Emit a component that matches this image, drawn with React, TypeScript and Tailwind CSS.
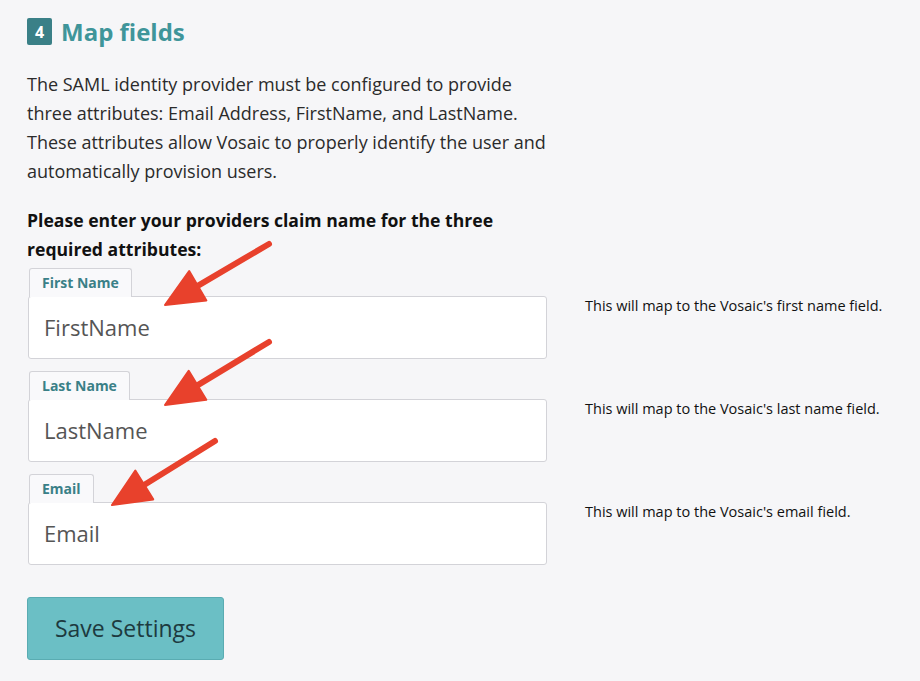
import React from "react";

const fields = [
  { label: "First Name", value: "FirstName", help: "This will map to the Vosaic's first name field." },
  { label: "Last Name", value: "LastName", help: "This will map to the Vosaic's last name field." },
  { label: "Email", value: "Email", help: "This will map to the Vosaic's email field." },
];

function Arrow({ x1, y1, x2, y2 }: { x1: number; y1: number; x2: number; y2: number }) {
  const dx = x2 - x1;
  const dy = y2 - y1;
  const len = Math.sqrt(dx * dx + dy * dy);
  const ux = dx / len;
  const uy = dy / len;
  const hl = 38;
  const hw = 17;
  const bx = x2 - ux * hl;
  const by = y2 - uy * hl;
  const px = -uy;
  const py = ux;
  const pts = `${x2},${y2} ${bx + px * hw},${by + py * hw} ${bx - px * hw},${by - py * hw}`;
  return (
    <g>
      <line x1={x1} y1={y1} x2={bx + ux * 4} y2={by + uy * 4} stroke="#e8412c" strokeWidth={6} strokeLinecap="round" />
      <polygon points={pts} fill="#e8412c" stroke="#e8412c" strokeWidth={2} strokeLinejoin="round" />
    </g>
  );
}

export default function App() {
  return (
    <div className="relative w-[920px] h-[681px] bg-[#f6f6f8] overflow-hidden" style={{ fontFamily: "'Open Sans', Lato, sans-serif" }}>
      <div className="pl-[27px] pt-[18px]">
        <div className="flex items-center gap-[9px] h-[27px]">
          <div className="w-[25px] h-[27px] bg-[#3a8087] rounded-[2px] flex items-center justify-center text-white font-bold text-[16px]">4</div>
          <div className="text-[#3f959a] font-bold text-[24px] leading-none">Map fields</div>
        </div>
        <p className="mt-[25px] w-[522px] text-[18px] leading-[29px] text-[#2b2b2b]">
          The SAML identity provider must be configured to provide three attributes: Email Address, FirstName, and LastName. These attributes allow Vosaic to properly identify the user and automatically provision users.
        </p>
        <p className="mt-[20px] w-[500px] text-[17.6px] leading-[29px] font-bold text-[#111]">
          Please enter your providers claim name for the three required attributes:
        </p>
        <div className="mt-[3px] flex flex-col gap-[11px]">
          {fields.map((f) => (
            <div key={f.label} className="flex items-start">
              <div className="w-[519px] ml-[1px]">
                <div className="inline-block ml-[1px] h-[29px] px-[12px] pt-[5px] border border-b-0 border-[#d3d3d8] rounded-t-[3px] bg-[#f9f9fb] text-[14px] leading-[18px] font-bold text-[#3a8087] relative top-[1px]">
                  {f.label}
                </div>
                <div className="h-[63px] bg-white border border-[#d3d3d8] rounded-[3px] flex items-center px-[15px] text-[22px] text-[#555]">
                  {f.value}
                </div>
              </div>
              <div className="ml-[38px] mt-[28px] text-[14.5px] text-[#111]">{f.help}</div>
            </div>
          ))}
        </div>
        <button className="mt-[32px] w-[197px] h-[63px] bg-[#6bbfc5] border border-[#5aacb2] rounded-[3px] text-[23px] text-[#1d3a3f]">
          Save Settings
        </button>
      </div>
      <svg className="absolute inset-0 pointer-events-none" width="920" height="681">
        <Arrow x1={269} y1={244} x2={165} y2={305} />
        <Arrow x1={269} y1={342} x2={165} y2={405} />
        <Arrow x1={215} y1={441} x2={112} y2={505} />
      </svg>
    </div>
  );
}
